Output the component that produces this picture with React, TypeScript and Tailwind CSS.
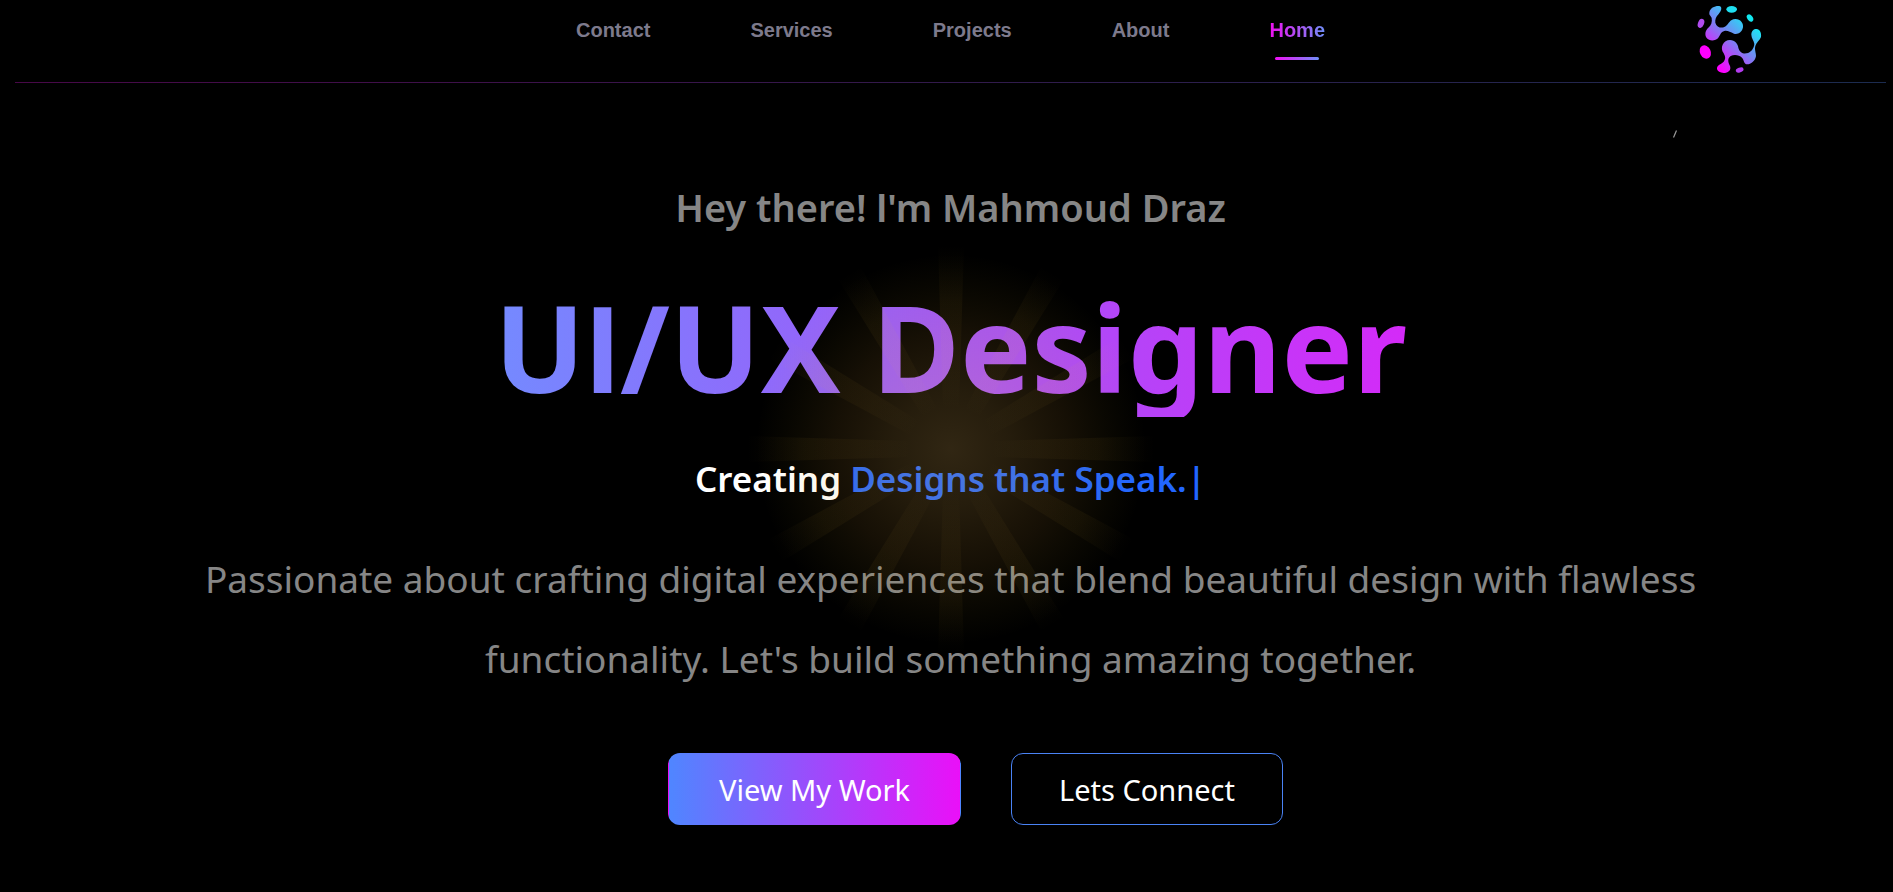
const links = ["Contact", "Services", "Projects", "About"];
const rays = [0, 30, 60, 90, 120, 150, 180, 210, 240, 270, 300, 330];

function Logo() {
  return (
    <svg viewBox="0 0 240 240" className="size-20" role="img" aria-label="Logo">
      <defs>
        <linearGradient id="logo" gradientUnits="userSpaceOnUse" x1="65" y1="185" x2="185" y2="60">
          <stop offset="0" stopColor="#ff00ff" />
          <stop offset="0.5" stopColor="#817af3" />
          <stop offset="1" stopColor="#12f0f5" />
        </linearGradient>
      </defs>
      <g fill="url(#logo)">
        <path d="M58 38C60 22 80 16 90 19C97 22 94 34 86 42C78 50 75 58 76 68C80 84 98 86 107 79C117 72 118 58 136 57C152 57 161 70 159 82C156 98 143 104 132 101C120 97 114 91 103 93C92 96 92 104 85 113C76 124 58 124 50 114C43 104 46 90 55 83C64 76 67 66 65 54C63 47 57 46 58 38Z" />
        <path d="M120 120C135 120 144 132 145 143C148 156 158 162 170 160C182 158 192 146 193 132C192 122 184 115 184 104C184 92 192 86 201 87C211 89 215 101 213 111C210 121 199 127 196 138C193 150 198 156 198 168C196 183 182 193 172 193C160 192 163 180 156 173C148 165 133 163 122 168C112 175 114 186 119 196C124 206 120 216 108 218C94 221 80 214 81 204C82 194 95 192 101 185C108 176 106 170 101 160C95 152 94 142 98 134C102 125 110 120 120 120Z" />
      </g>
      <ellipse cx="125" cy="28" rx="16" ry="10" fill="#1fdff0" />
      <ellipse cx="180" cy="54" rx="8" ry="12" transform="rotate(-38 180 54)" fill="#12e8f0" />
      <ellipse cx="33" cy="70" rx="9" ry="14" transform="rotate(22 33 70)" fill="#b14cf0" />
      <ellipse cx="46" cy="156" rx="16" ry="21" transform="rotate(-25 46 156)" fill="#ff00ff" />
      <ellipse cx="149" cy="210" rx="12" ry="7" transform="rotate(-20 149 210)" fill="#b43cf0" />
    </svg>
  );
}

function Glow() {
  return (
    <svg
      viewBox="-204 -204 408 408"
      className="pointer-events-none absolute left-1/2 top-[366px] size-[408px] -translate-1/2"
      aria-hidden="true"
    >
      <defs>
        <radialGradient id="halo">
          <stop offset="0" stopColor="#f5c060" stopOpacity="0.2" />
          <stop offset="0.3" stopColor="#f0b850" stopOpacity="0.155" />
          <stop offset="0.6" stopColor="#e8a838" stopOpacity="0.095" />
          <stop offset="0.85" stopColor="#d0a820" stopOpacity="0.035" />
          <stop offset="1" stopColor="#c0a820" stopOpacity="0" />
        </radialGradient>
        <linearGradient id="ray" gradientUnits="userSpaceOnUse" x1="0" y1="-204" x2="0" y2="-40">
          <stop offset="0" stopColor="#e0b030" stopOpacity="0" />
          <stop offset="0.35" stopColor="#e0b030" stopOpacity="0.05" />
          <stop offset="0.7" stopColor="#e8b840" stopOpacity="0.035" />
          <stop offset="1" stopColor="#f0c050" stopOpacity="0" />
        </linearGradient>
      </defs>
      <circle r="195" fill="url(#halo)" />
      {rays.map((angle) => (
        <path key={angle} d="M-13 -204H13L8 -40H-8Z" transform={`rotate(${angle})`} fill="url(#ray)" />
      ))}
    </svg>
  );
}

export default function App() {
  return (
    <div className="min-h-screen bg-black pl-[15px] pr-[7px] font-['Noto_Sans','Open_Sans',sans-serif]">
      <header className="relative flex h-[82px] justify-center">
        <nav className="flex gap-[100px] pt-[18px] font-['Liberation_Sans',Arial,sans-serif] text-xl font-bold leading-6 text-[#7d7a8c]">
          {links.map((link) => (
            <a key={link} href={`#${link.toLowerCase()}`}>
              {link}
            </a>
          ))}
          <a href="#home" aria-current="page" className="flex flex-col items-center gap-[15px]">
            <span className="bg-linear-to-r/srgb from-[#f00ff0] to-[#6f8ff8] bg-clip-text text-transparent">Home</span>
            <span className="h-[3px] w-11 rounded-full bg-linear-to-r/srgb from-[#f010f5] to-[#6f8ff8]" />
          </a>
        </nav>
        <a href="#home" className="absolute right-[116px] top-0">
          <Logo />
        </a>
      </header>
      <div className="h-px bg-linear-to-r/srgb from-[#480848] to-[#1c2c50]" />

      <main className="relative flex flex-col items-center text-center">
        <svg viewBox="0 0 6 10" className="absolute right-[208px] top-[46px] h-[10px] w-[6px]" aria-hidden="true">
          <path d="M1.5 8.5L4.5 1.5" stroke="#9a9a9a" strokeWidth="1.2" />
        </svg>
        <p className="pt-[94px] text-[38px] font-semibold leading-[60px] text-[#868686]">
          Hey there! <span className="font-['Roboto'] leading-none">I</span>'m Mahmoud Draz
        </p>
        <h1 className="mt-10 bg-linear-to-r/srgb from-[#748aff] via-[#a155f8] to-[#d42af8] bg-clip-text text-[120px] font-bold leading-[140px] text-transparent">
          U<span className="font-['Roboto'] leading-none">I</span>/UX Designer
        </h1>
        <p className="mt-[41px] h-[42px] overflow-hidden text-[35px] font-semibold leading-[42px] text-white">
          Creating <span className="text-[#2266ff]">Designs that Speak.|</span>
        </p>
        <p className="mt-[39px] max-w-[1580px] text-[37px] leading-[80px] text-[#868686]">
          Passionate about crafting digital experiences that blend beautiful design with flawless functionality. Let's
          build something amazing together.
        </p>
        <div className="ml-[50px] mt-[54px] flex gap-[50px] text-[29px] leading-[68px] text-white">
          <button className="rounded-xl border border-transparent bg-linear-to-r/srgb from-[#4f86ff] to-[#ea10f8] px-[50px] pt-0.5">
            View My Work
          </button>
          <button className="rounded-xl border border-[#4a83f5] px-[47px] pt-0.5">Lets Connect</button>
        </div>
        <Glow />
      </main>
    </div>
  );
}
